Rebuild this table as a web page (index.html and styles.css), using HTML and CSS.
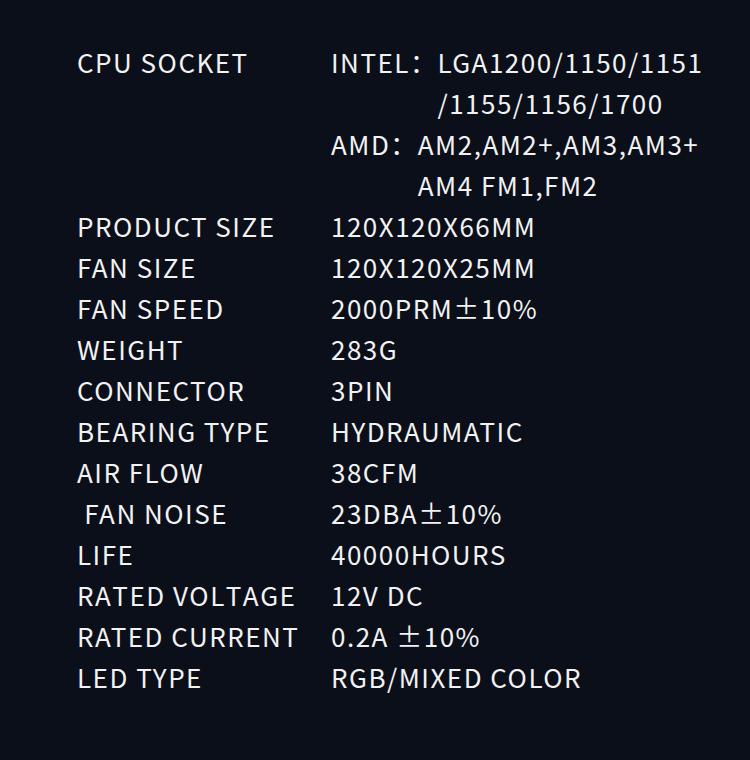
FILE: index.html
```html
<!DOCTYPE html>
<html>
<head>
<meta charset="utf-8">
<link rel="stylesheet" href="styles.css">
</head>
<body>
<div class="specs">
  <div class="k">CPU SOCKET</div>
  <div class="v">
    <div class="sub"><span class="lbl">INTEL：</span><span class="txt">LGA1200/1150/1151<br>/1155/1156/1700</span></div>
    <div class="sub"><span class="lbl">AMD：</span><span class="txt">AM2,AM2+,AM3,AM3+<br>AM4 FM1,FM2</span></div>
  </div>
  <div class="k">PRODUCT SIZE</div><div class="v">120X120X66MM</div>
  <div class="k">FAN SIZE</div><div class="v">120X120X25MM</div>
  <div class="k">FAN SPEED</div><div class="v">2000PRM±10%</div>
  <div class="k">WEIGHT</div><div class="v">283G</div>
  <div class="k">CONNECTOR</div><div class="v">3PIN</div>
  <div class="k">BEARING TYPE</div><div class="v">HYDRAUMATIC</div>
  <div class="k">AIR FLOW</div><div class="v">38CFM</div>
  <div class="k">&nbsp;FAN NOISE</div><div class="v">23DBA±10%</div>
  <div class="k">LIFE</div><div class="v">40000HOURS</div>
  <div class="k nokern">RATED VOLTAGE</div><div class="v">12V DC</div>
  <div class="k">RATED CURRENT</div><div class="v">0.2A ±10%</div>
  <div class="k">LED TYPE</div><div class="v">RGB/MIXED COLOR</div>
</div>
</body>
</html>
```
FILE: styles.css
```css
html, body {
  margin: 0;
  padding: 0;
  background: #0b0f1a;
}
body {
  width: 750px;
  height: 760px;
  overflow: hidden;
  font-family: "Noto Sans CJK SC", "Noto Sans", sans-serif;
  color: #f2f2f2;
  font-size: 26px;
  letter-spacing: 1.5px;
  line-height: 41px;
}
.specs {
  display: grid;
  grid-template-columns: 254px auto;
  padding: 41px 0 0 77px;
}
.k, .v {
  white-space: nowrap;
}
.nokern {
  font-kerning: none;
}
.sub {
  display: flex;
}
.lbl {
  flex: none;
}
.txt {
  display: block;
}
```
